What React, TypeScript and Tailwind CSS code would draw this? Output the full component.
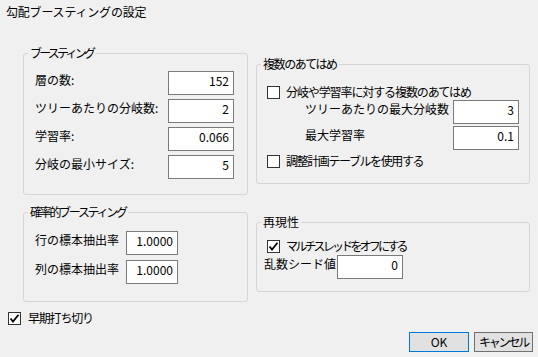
import React from "react";

const FONT = { fontFamily: '"Noto Sans CJK JP", "Noto Sans", sans-serif' };

function Check({ checked }: { checked?: boolean }) {
  return (
    <span className="w-[13px] h-[13px] border border-[#333333] bg-white flex items-center justify-center shrink-0">
      {checked && (
        <svg width="11" height="11" viewBox="0 0 11 11">
          <path d="M1.5 5.5 L4 8.5 L9.5 1.8" fill="none" stroke="#000" strokeWidth="1.8" />
        </svg>
      )}
    </span>
  );
}

function Field({ value, w }: { value: string; w: string }) {
  return (
    <div
      className={`${w} h-[24px] border border-[#7a7a7a] bg-white leading-[16px] pt-[1px] pr-[4px] pl-[4px] text-right shrink-0`}
    >
      {value}
    </div>
  );
}

function Group({
  title,
  track,
  className,
  children,
}: {
  title: string;
  track: string;
  className: string;
  children: React.ReactNode;
}) {
  return (
    <div className={`relative border border-[#d5d5d5] rounded-[3px] ${className}`}>
      <span className={`absolute top-[-9px] left-[4px] px-[2px] bg-[#f0f0f0] leading-[16px] whitespace-nowrap ${track}`}>
        {title}
      </span>
      {children}
    </div>
  );
}

export default function App() {
  return (
    <div className="w-[538px] h-[357px] bg-[#f0f0f0] text-[12px] text-black flex flex-col" style={FONT}>
      <div className="h-[20px] pt-[4px] pl-[6px] leading-[16px] tracking-[-0.2px]">勾配ブースティングの設定</div>
      <div className="flex pl-[23px] h-[282px]">
        <div className="w-[225px] pt-[33px] flex flex-col">
          <Group
            title="ブースティング"
            track="tracking-[-2.8px]"
            className="h-[142px] pt-[17px] pl-[11px] pr-[13px] flex flex-col gap-[4px]"
          >
            {[
              ["層の数:", "152"],
              ["ツリーあたりの分岐数:", "2"],
              ["学習率:", "0.066"],
              ["分岐の最小サイズ:", "5"],
            ].map(([l, v]) => (
              <div key={l} className="flex justify-between items-start h-[24px]">
                <span className="leading-[16px] pt-[1px]">{l}</span>
                <Field value={v} w="w-[66px]" />
              </div>
            ))}
          </Group>
          <Group
            title="確率的ブースティング"
            track="tracking-[-2.3px]"
            className="mt-[17px] h-[90px] pt-[18px] pl-[11px] flex flex-col gap-[5px]"
          >
            {[
              ["行の標本抽出率", "1.0000"],
              ["列の標本抽出率", "1.0000"],
            ].map(([l, v]) => (
              <div key={l} className="flex items-start gap-[7px] h-[24px]">
                <span className="leading-[16px] pt-[1px] w-[84px]">{l}</span>
                <Field value={v} w="w-[52px]" />
              </div>
            ))}
          </Group>
        </div>
        <div className="ml-[8px] w-[274px] pt-[44px] flex flex-col">
          <Group title="複数のあてはめ" track="tracking-[-1.4px]" className="h-[120px] pt-[19px] flex flex-col">
            <div className="flex items-center h-[16px] pl-[10px] gap-[6px]">
              <Check />
              <span className="leading-[16px] whitespace-nowrap tracking-[-1.1px]">分岐や学習率に対する複数のあてはめ</span>
            </div>
            <div className="flex flex-col gap-[2px] pl-[48px] pr-[10px]">
              {[
                ["ツリーあたりの最大分岐数", "3"],
                ["最大学習率", "0.1"],
              ].map(([l, v]) => (
                <div key={l} className="flex justify-between items-start h-[24px]">
                  <span className="leading-[16px] pt-[1px]">{l}</span>
                  <Field value={v} w="w-[66px]" />
                </div>
              ))}
            </div>
            <div className="flex items-center h-[16px] pl-[10px] gap-[6px] mt-[3px]">
              <Check />
              <span className="leading-[16px] whitespace-nowrap tracking-[-1.4px]">調整計画テーブルを使用する</span>
            </div>
          </Group>
          <Group title="再現性" track="" className="mt-[38px] h-[70px] pt-[15px] flex flex-col">
            <div className="flex items-center h-[16px] pl-[10px] gap-[6px]">
              <Check checked />
              <span className="leading-[16px] whitespace-nowrap tracking-[-2.8px]">マルチスレッドをオフにする</span>
            </div>
            <div className="flex items-start h-[24px] mt-[1px] pl-[7px] gap-[1px]">
              <span className="leading-[16px] pt-[1px] w-[72px] whitespace-nowrap">乱数シード値</span>
              <Field value="0" w="w-[66px]" />
            </div>
          </Group>
        </div>
      </div>
      <div className="flex items-center h-[16px] mt-[8px] pl-[8px] gap-[7px]">
        <Check checked />
        <span className="leading-[16px] whitespace-nowrap tracking-[-1.2px]">早期打ち切り</span>
      </div>
      <div className="flex justify-end gap-[5px] pr-[5px] mt-[6px]">
        <button className="w-[60px] h-[20px] bg-[#e1e1e1] border border-[#0078d7] leading-[16px]">OK</button>
        <button className="w-[59px] h-[20px] bg-[#e1e1e1] border border-[#707070] leading-[16px] whitespace-nowrap tracking-[-2.2px]">
          キャンセル
        </button>
      </div>
    </div>
  );
}
